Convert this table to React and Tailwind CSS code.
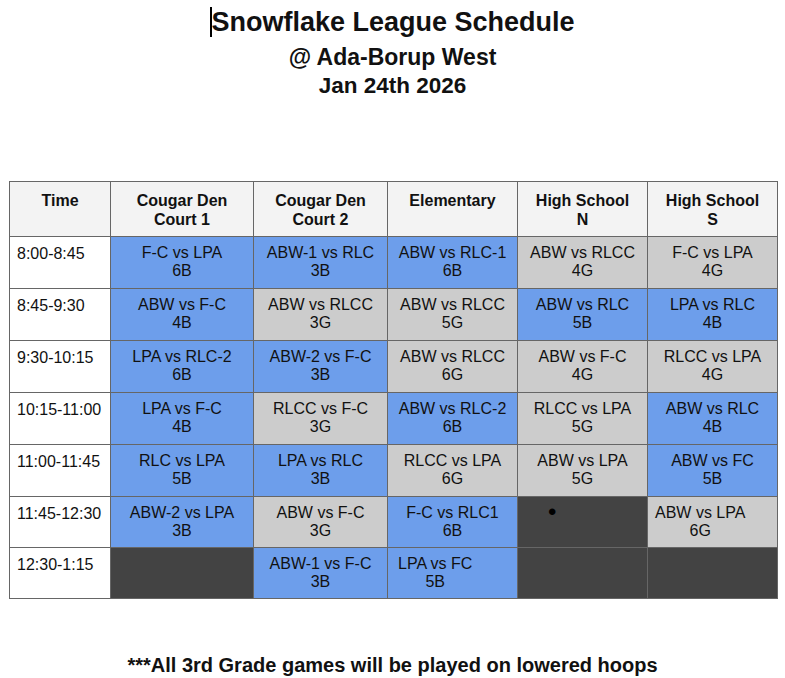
import React from 'react';

const BLUE = 'bg-[#6d9eeb]';
const GRAY = 'bg-[#cccccc]';
const DARK = 'bg-[#434343]';

const rows = [
    { time: '8:00-8:45', h: 'h-[52px]', cells: [
        { t: 'F-C vs LPA', g: '6B', c: BLUE },
        { t: 'ABW-1 vs RLC', g: '3B', c: BLUE },
        { t: 'ABW vs RLC-1', g: '6B', c: BLUE },
        { t: 'ABW vs RLCC', g: '4G', c: GRAY },
        { t: 'F-C vs LPA', g: '4G', c: GRAY },
    ] },
    { time: '8:45-9:30', h: 'h-[52px]', cells: [
        { t: 'ABW vs F-C', g: '4B', c: BLUE },
        { t: 'ABW vs RLCC', g: '3G', c: GRAY },
        { t: 'ABW vs RLCC', g: '5G', c: GRAY },
        { t: 'ABW vs RLC', g: '5B', c: BLUE },
        { t: 'LPA vs RLC', g: '4B', c: BLUE },
    ] },
    { time: '9:30-10:15', h: 'h-[52px]', cells: [
        { t: 'LPA vs RLC-2', g: '6B', c: BLUE },
        { t: 'ABW-2 vs F-C', g: '3B', c: BLUE },
        { t: 'ABW vs RLCC', g: '6G', c: GRAY },
        { t: 'ABW vs F-C', g: '4G', c: GRAY },
        { t: 'RLCC vs LPA', g: '4G', c: GRAY },
    ] },
    { time: '10:15-11:00', h: 'h-[52px]', cells: [
        { t: 'LPA vs F-C', g: '4B', c: BLUE },
        { t: 'RLCC vs F-C', g: '3G', c: GRAY },
        { t: 'ABW vs RLC-2', g: '6B', c: BLUE },
        { t: 'RLCC vs LPA', g: '5G', c: GRAY },
        { t: 'ABW vs RLC', g: '4B', c: BLUE },
    ] },
    { time: '11:00-11:45', h: 'h-[52px]', cells: [
        { t: 'RLC vs LPA', g: '5B', c: BLUE },
        { t: 'LPA vs RLC', g: '3B', c: BLUE },
        { t: 'RLCC vs LPA', g: '6G', c: GRAY },
        { t: 'ABW vs LPA', g: '5G', c: GRAY },
        { t: 'ABW vs FC', g: '5B', c: BLUE },
    ] },
    { time: '11:45-12:30', h: 'h-[51px]', cells: [
        { t: 'ABW-2 vs LPA', g: '3B', c: BLUE },
        { t: 'ABW vs F-C', g: '3G', c: GRAY },
        { t: 'F-C vs RLC1', g: '6B', c: BLUE },
        { bullet: true, c: DARK },
        { t: 'ABW vs LPA', g: '6G', c: GRAY, left: 'pl-[7px]' },
    ] },
    { time: '12:30-1:15', h: 'h-[51px]', cells: [
        { c: DARK },
        { t: 'ABW-1 vs F-C', g: '3B', c: BLUE },
        { t: 'LPA vs FC', g: '5B', c: BLUE, left: 'pl-[10px]' },
        { c: DARK },
        { c: DARK },
    ] },
];

const headers = [
    { label: 'Time', w: 'w-[101px]' },
    { label: <>Cougar Den<br />Court 1</>, w: 'w-[143px]' },
    { label: <>Cougar Den<br />Court 2</>, w: 'w-[134px]' },
    { label: 'Elementary', w: 'w-[130px]' },
    { label: <>High School<br />N</>, w: 'w-[130px]' },
    { label: <>High School<br />S</>, w: 'w-[130px]' },
];

const Cell = ({ cell }) => {
    if (cell.bullet) {
        return (
            <td className={`${cell.c} border border-[#666666] align-top`}>
                <div className="pl-[30px] pt-[6px] leading-[18px] text-[24px] text-black">•</div>
            </td>
        );
    }
    if (!cell.t) {
        return <td className={`${cell.c} border border-[#666666]`} />;
    }
    if (cell.left) {
        return (
            <td className={`${cell.c} border border-[#666666] align-top text-left ${cell.left} pt-[7px]`}>
                <div className="inline-block text-center leading-[18px]">
                    {cell.t}<br />{cell.g}
                </div>
            </td>
        );
    }
    return (
        <td className={`${cell.c} border border-[#666666] align-top text-center pt-[7px] leading-[18px]`}>
            {cell.t}<br />{cell.g}
        </td>
    );
};

const App = () => {
    return (
        <div className="w-[785px] h-[678px] bg-white text-[#111111] overflow-hidden" style={{ fontFamily: '"Liberation Sans", Arial, sans-serif' }}>
            <div className="flex flex-col items-center pt-[7px] font-bold">
                <h1 className="text-[27px] leading-[30px] flex items-center">
                    <span className="inline-block w-[2px] h-[30px] bg-black mr-[-1px]" />
                    Snowflake League Schedule
                </h1>
                <div className="text-[23px] leading-[28px] mt-[6px]">@ Ada-Borup West</div>
                <div className="text-[22.5px] leading-[28px] mt-[1px]">Jan 24th 2026</div>
            </div>

            <table className="ml-[9px] mt-[81px] border-collapse table-fixed w-[768px] text-[16px]">
                <thead>
                    <tr className="h-[55px]">
                        {headers.map((h, i) => (
                            <th key={i} className={`${h.w} bg-[#f3f3f3] border border-[#666666] align-top pt-[9px] leading-[19px] font-bold text-center`}>
                                {h.label}
                            </th>
                        ))}
                    </tr>
                </thead>
                <tbody>
                    {rows.map((r, i) => (
                        <tr key={i} className={r.h}>
                            <td className="bg-white border border-[#666666] align-top text-left pl-[7px] pt-[8px] leading-[18px]">{r.time}</td>
                            {r.cells.map((c, j) => <Cell key={j} cell={c} />)}
                        </tr>
                    ))}
                </tbody>
            </table>

            <div className="mt-[54px] text-center font-bold text-[20px] leading-[24px]">
                ***All 3rd Grade games will be played on lowered hoops
            </div>
        </div>
    );
};

export default App;
